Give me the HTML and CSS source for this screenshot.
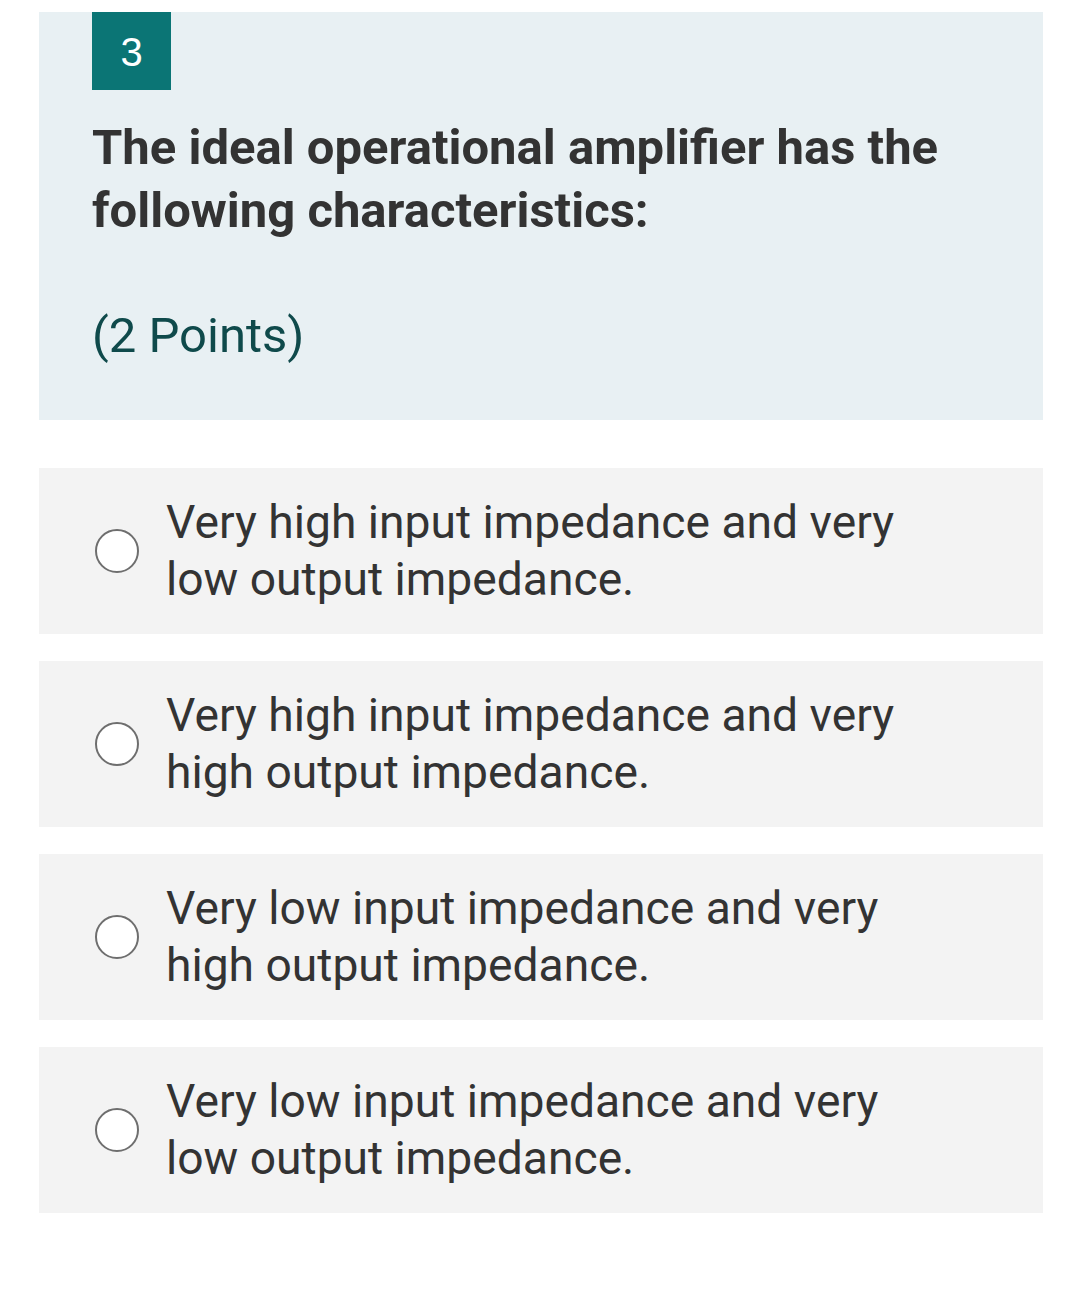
FILE: index.html
```html
<!DOCTYPE html>
<html>
<head>
<meta charset="utf-8">
<link rel="stylesheet" href="styles.css">
</head>
<body>
<div class="page">
  <div class="question">
    <div class="badge">3</div>
    <div class="title">The ideal operational amplifier has the following characteristics:</div>
    <div class="points">(2 Points)</div>
  </div>
  <div class="options">
    <div class="option"><span class="radio"></span><span class="label">Very high input impedance and very low output impedance.</span></div>
    <div class="option"><span class="radio"></span><span class="label">Very high input impedance and very high output impedance.</span></div>
    <div class="option"><span class="radio"></span><span class="label">Very low input impedance and very high output impedance.</span></div>
    <div class="option"><span class="radio"></span><span class="label">Very low input impedance and very low output impedance.</span></div>
  </div>
</div>
</body>
</html>
```
FILE: styles.css
```css
html, body { margin: 0; padding: 0; background: #ffffff; }
body { font-family: Roboto, "Noto Sans", sans-serif; color: #333333; }
.page { padding: 12px 37px 0 39px; }
.question {
  background: #e8f0f3;
  padding: 0 53px 0 53px;
  height: 408px;
  box-sizing: border-box;
}
.badge {
  width: 79px; height: 78px;
  background: #0b7575;
  color: #ffffff;
  font-family: "Liberation Sans", Arial, sans-serif;
  font-size: 40px;
  padding-top: 3px;
  box-sizing: border-box;
  display: flex; align-items: center; justify-content: center;
}
.title {
  margin-top: 26px;
  font-size: 49px;
  font-weight: 700;
  line-height: 63px;
  color: #333333;
}
.points {
  margin-top: 64px;
  font-size: 49px;
  line-height: 60px;
  color: #0f4a4b;
}
.options { margin-top: 48px; display: flex; flex-direction: column; gap: 27px; }
.option {
  background: #f3f3f3;
  height: 166px;
  box-sizing: border-box;
  display: flex; align-items: center;
  padding-left: 56px;
  padding-right: 60px;
}
.radio {
  flex: none;
  width: 44px; height: 44px;
  border: 2.5px solid #6e6e6e;
  border-radius: 50%;
  background: #ffffff;
  box-sizing: border-box;
  margin-right: 27px;
}
.label {
  font-size: 46.2px;
  line-height: 57px;
  color: #333333;
  max-width: 780px;
}
```
